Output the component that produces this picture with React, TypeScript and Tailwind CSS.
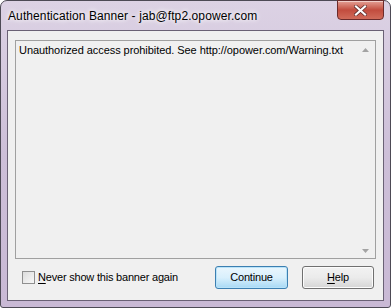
export default function App() {
  const ui = { fontFamily: '"Liberation Sans", Arial, sans-serif' };

  return (
    <div className="w-[391px] h-[308px] bg-white">
      <div className="w-[391px] h-[308px] rounded-t-[7px] rounded-b-[3px] border border-[#4d4a55] bg-gradient-to-b from-[#dcd2e4] via-[#cdbfd8] to-[#c9b9d5] flex flex-col px-[6px] pb-[6px]" style={ui}>
        {/* title bar */}
        <div className="h-[29px] flex items-start relative">
          <span className="mt-[6px] ml-[1px] text-[12px] tracking-[0.1px] text-black [text-shadow:0_0_6px_#fff,0_0_4px_#fff]">
            Authentication Banner - jab@ftp2.opower.com
          </span>
          <div className="absolute right-0 -top-px w-[47px] h-[20px] rounded-b-[4px] border border-[#6b2b2b] bg-gradient-to-b from-[#e3a095] via-[#c24c3e] to-[#d06b5a] flex items-center justify-center shadow-[inset_0_1px_0_rgba(255,255,255,0.5)]">
            <svg width="13" height="11" viewBox="0 0 13 11">
              <path d="M2 1.5 L11 9.5 M11 1.5 L2 9.5" stroke="#5a2a2a" strokeWidth="3.6" strokeLinecap="square" />
              <path d="M2 1.5 L11 9.5 M11 1.5 L2 9.5" stroke="#ffffff" strokeWidth="2.2" strokeLinecap="square" />
            </svg>
          </div>
        </div>

        {/* client area */}
        <div className="flex-1 border border-[#6a6175] bg-[#f0f0f0] flex flex-col px-[7px] pt-[9px] text-[11px] tracking-[-0.2px]">
          <div className="h-[219px] border border-[#a0a0a0] bg-[#f0f0f0] flex">
            <div className="flex-1 pl-[3px] pt-[2px] text-black leading-[14px] tracking-[-0.06px]">
              Unauthorized access prohibited. See http://opower.com/Warning.txt
            </div>
            <div className="w-[18px] flex flex-col justify-between items-center pt-[7px] pb-[5px] pr-[2px] bg-[#f0f0f0]">
              <svg width="7" height="4" viewBox="0 0 7 4">
                <path d="M3.5 0 L7 4 L0 4 Z" fill="#a3a3a3" />
              </svg>
              <svg width="7" height="4" viewBox="0 0 7 4">
                <path d="M0 0 L7 0 L3.5 4 Z" fill="#a3a3a3" />
              </svg>
            </div>
          </div>

          <div className="flex items-center mt-[7px]">
            <div className="ml-[7px] w-[13px] h-[13px] border border-[#8f8f8f] bg-gradient-to-br from-[#dcdcdc] to-[#f8f8f8]" />
            <span className="ml-[3px] text-black">
              <span className="underline underline-offset-2">N</span>ever show this banner again
            </span>
            <button className="ml-auto w-[73px] h-[23px] rounded-[3px] border border-[#3c7fb1] bg-gradient-to-b from-[#eaf6fd] via-[#d9f0fc] to-[#a7d9f5] text-black shadow-[inset_0_0_0_1px_#b9e3f9]">
              Continue
            </button>
            <button className="ml-[14px] mr-[2px] w-[72px] h-[23px] rounded-[3px] border border-[#707070] bg-gradient-to-b from-[#f2f2f2] via-[#ebebeb] to-[#d5d5d5] text-black shadow-[inset_0_0_0_1px_#fcfcfc]">
              <span className="underline underline-offset-2">H</span>elp
            </button>
          </div>
        </div>
      </div>
    </div>
  );
}
